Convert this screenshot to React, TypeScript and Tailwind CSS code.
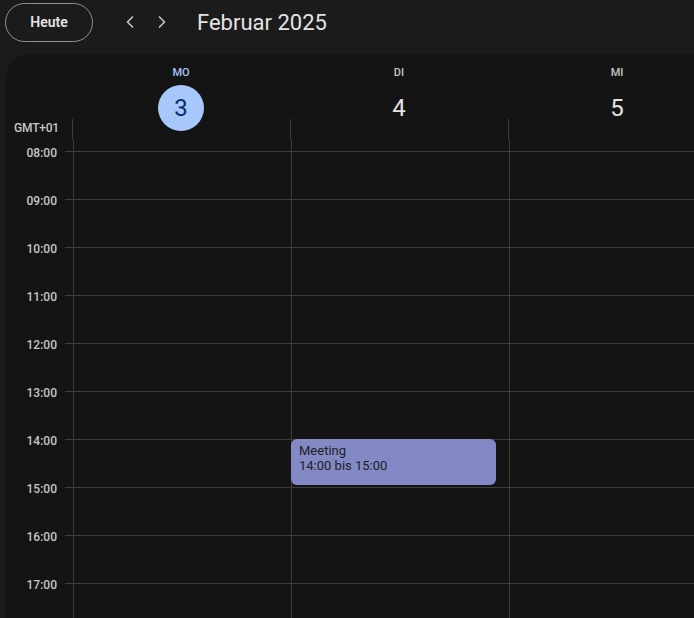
import React from "react";
import { ChevronLeft, ChevronRight } from "lucide-react";

const hours = ["08:00","09:00","10:00","11:00","12:00","13:00","14:00","15:00","16:00","17:00"];
const days = [
  { name: "MO", num: "3", today: true },
  { name: "DI", num: "4", today: false },
  { name: "MI", num: "5", today: false },
];

export default function App() {
  return (
    <div className="w-[694px] h-[618px] bg-[#1b1b1b] overflow-hidden flex flex-col" style={{ fontFamily: "Roboto, 'Noto Sans', sans-serif" }}>
      <div className="h-[54px] shrink-0 flex items-start">
        <button className="ml-[5px] mt-[3px] w-[88px] h-[39px] rounded-full border border-[#8e918f] text-[14px] font-semibold text-[#e3e3e3] flex items-center justify-center">
          Heute
        </button>
        <div className="ml-[27px] mt-[12px] flex items-center gap-[12px] text-[#c4c7c5]">
          <ChevronLeft size={20} strokeWidth={2} />
          <ChevronRight size={20} strokeWidth={2} />
        </div>
        <div className="ml-[25px] mt-[9px] text-[22px] leading-[28px] text-[#e3e3e3]">Februar 2025</div>
      </div>
      <div className="flex-1 ml-[6px] bg-[#141414] rounded-tl-[24px] overflow-hidden flex flex-col">
        <div className="h-[85px] shrink-0 flex">
          <div className="w-[66px] shrink-0 flex items-end justify-end pr-[13px] pb-[4px]">
            <span className="text-[12px] font-medium text-[#c4c7c5] leading-[14px] tracking-[-0.2px]">GMT+01</span>
          </div>
          {days.map((d) => (
            <div key={d.name} className="w-[218px] shrink-0 relative flex flex-col items-center">
              <div className="absolute left-0 bottom-0 h-[20px] w-px bg-[#3c3c3c]" />
              <div className={`mt-[12px] text-[11px] font-medium leading-[14px] ${d.today ? "text-[#a8c7fa]" : "text-[#c4c7c5]"}`}>{d.name}</div>
              <div className={`mt-[5px] w-[46px] h-[46px] rounded-full flex items-center justify-center text-[24px] ${d.today ? "bg-[#a8c7fa] text-[#062e6f]" : "text-[#e3e3e3]"}`}>{d.num}</div>
            </div>
          ))}
        </div>
        <div className="flex-1 relative">
          <div className="pt-[12px] flex flex-col">
            {hours.map((h) => (
              <div key={h} className="h-[48px] flex shrink-0">
                <div className="w-[59px] shrink-0 pr-[8px] text-right">
                  <span className="block -mt-[5px] text-[12px] leading-[14px] font-medium text-[#c4c7c5]">{h}</span>
                </div>
                <div className="flex-1 border-t border-[#3c3c3c]" />
              </div>
            ))}
          </div>
          <div className="absolute top-0 bottom-0 left-[67px] flex">
            {days.map((d, i) => (
              <div key={d.name} className="w-[218px] shrink-0 border-l border-[#3c3c3c] relative">
                {i === 1 && (
                  <div className="absolute -left-px top-[300px] w-[205px] h-[46px] rounded-[6px] bg-[#8389c5] px-[8px] pt-[4px] text-[13px] leading-[15px] text-[#1f1f1f]">
                    <div>Meeting</div>
                    <div>14:00 bis 15:00</div>
                  </div>
                )}
              </div>
            ))}
          </div>
        </div>
      </div>
    </div>
  );
}
